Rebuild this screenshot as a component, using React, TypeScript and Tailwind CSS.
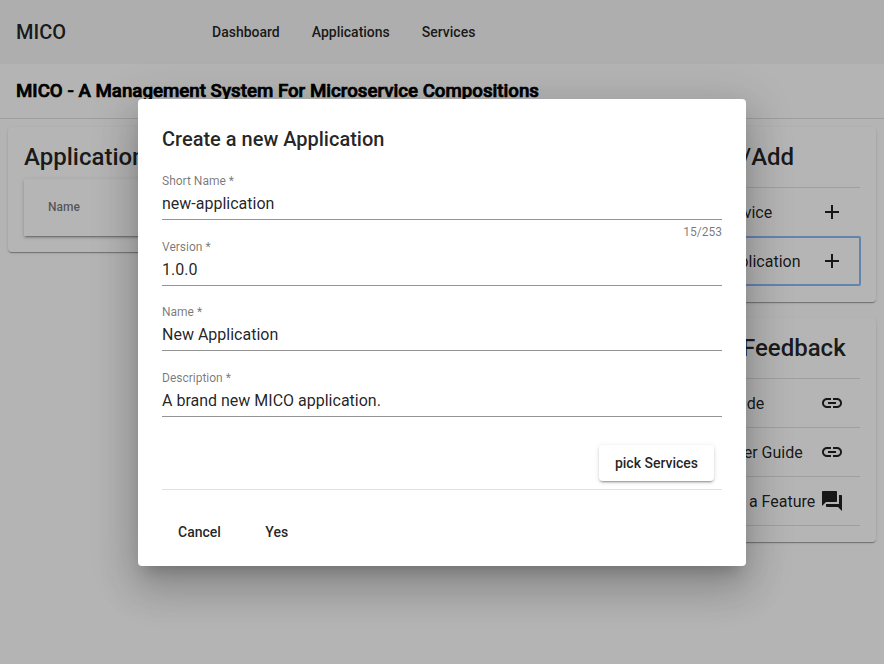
import type { ReactNode } from "react";

const cardShadow =
  "shadow-[0_2px_1px_-1px_rgba(0,0,0,.2),0_1px_1px_0_rgba(0,0,0,.14),0_1px_3px_0_rgba(0,0,0,.12)]";
const raisedShadow =
  "shadow-[0_3px_1px_-2px_rgba(0,0,0,.2),0_2px_2px_0_rgba(0,0,0,.14),0_1px_5px_0_rgba(0,0,0,.12)]";

const ICONS = {
  add: "M19 13h-6v6h-2v-6H5v-2h6V5h2v6h6v2z",
  link: "M3.9 12c0-1.71 1.39-3.1 3.1-3.1h4V7H7c-2.76 0-5 2.24-5 5s2.24 5 5 5h4v-1.900H7c-1.710 0-3.100-1.390-3.100-3.100zM8 13h8v-2H8v2zm9-6h-4v1.900h4c1.710 0 3.100 1.390 3.100 3.100s-1.390 3.100-3.100 3.100h-4V17h4c2.760 0 5-2.240 5-5s-2.240-5-5-5z",
  forum:
    "M21 6h-2v9H6v2c0 .55.45 1 1 1h11l4 4V7c0-.55-.45-1-1-1zm-4 6V3c0-.55-.45-1-1-1H3c-.55 0-1 .45-1 1v14l4-4h10c.55 0 1-.45 1-1z",
};

function Icon({ name }: { name: keyof typeof ICONS }) {
  return (
    <svg viewBox="0 0 24 24" className="h-6 w-6 shrink-0" fill="currentColor">
      <path d={ICONS[name]} />
    </svg>
  );
}

function Card({ title, children }: { title: string; children: ReactNode }) {
  return (
    <section className={`rounded bg-white p-4 ${cardShadow}`}>
      <h2 className="h-9 text-2xl leading-[28px] font-medium whitespace-nowrap">{title}</h2>
      {children}
    </section>
  );
}

function ListRow({ label, icon, focused }: { label: string; icon: keyof typeof ICONS; focused?: boolean }) {
  return (
    <div
      className={`flex items-center justify-between pr-4 whitespace-nowrap ${
        icon === "add" ? "pl-[16.5px]" : "pl-[15.5px]"
      } ${
        focused
          ? "mb-px h-12 rounded-[1px] outline-2 -outline-offset-1 outline-[#8bbcf5]"
          : "h-[49px] border-b border-black/12"
      }`}
    >
      <span className="w-0 pt-[2px]">{label}</span>
      <Icon name={icon} />
    </div>
  );
}

function Field({ label, value, counter }: { label: string; value: string; counter?: string }) {
  return (
    <div className="h-[65.6px]">
      <div className="text-xs leading-[14px] text-black/54">{label} *</div>
      <div className="mt-[6px] h-[26px] border-b border-black/42 text-base leading-[19px]">{value}</div>
      {counter && <div className="mt-[5px] text-right text-xs leading-[14px] text-black/54">{counter}</div>}
    </div>
  );
}

export default function App() {
  return (
    <div className="relative h-[664px] w-[884px] overflow-hidden bg-[#fefefe] font-[Roboto,sans-serif] text-black/87">
      <header className="flex h-16 items-center bg-[#f5f5f5] px-4">
        <span className="w-[196px] text-xl font-medium">MICO</span>
        <nav className="flex gap-8 text-sm font-medium">
          <span>Dashboard</span>
          <span>Applications</span>
          <span>Services</span>
        </nav>
      </header>
      <div className="flex h-[55px] items-center border-b border-black/12 px-4 text-[18.72px] font-medium text-black [-webkit-text-stroke:0.7px_#000]">
        MICO - A Management System For Microservice Compositions
      </div>
      <main className="grid grid-cols-[1fr_220.8px] items-start gap-4 p-2">
        <Card title="Applications">
          <div className={`flex h-[57px] items-center bg-white px-6 pb-[2px] text-xs font-medium text-black/54 ${raisedShadow}`}>
            Name
          </div>
        </Card>
        <div className="grid gap-4">
          <Card title="Create/Add">
            <div className="mt-2 border-t border-black/12">
              <ListRow label="Add Service" icon="add" />
              <ListRow label="Add Application" icon="add" focused />
            </div>
          </Card>
          <Card title="Help / Feedback">
            <div className="mt-2 border-t border-black/12">
              <ListRow label="User Guide" icon="link" />
              <ListRow label="Developer Guide" icon="link" />
              <ListRow label="Request a Feature" icon="forum" />
            </div>
          </Card>
        </div>
      </main>

      <div className="absolute inset-0 flex items-center justify-center bg-black/29 pt-px">
        <div className="h-[467px] w-[608px] rounded bg-white p-6 shadow-[0_11px_15px_-7px_rgba(0,0,0,.2),0_24px_38px_3px_rgba(0,0,0,.14),0_9px_46px_8px_rgba(0,0,0,.12)]">
          <h1 className="h-[51px] text-xl leading-8 font-medium">Create a new Application</h1>
          <Field label="Short Name" value="new-application" counter="15/253" />
          <Field label="Version" value="1.0.0" />
          <Field label="Name" value="New Application" />
          <Field label="Description" value="A brand new MICO application." />
          <div className="mt-[9px] flex justify-end border-b border-black/12 pr-2 pb-2">
            <button className={`h-9 rounded bg-white px-4 text-sm font-medium ${raisedShadow}`}>pick Services</button>
          </div>
          <div className="mt-6 flex gap-[12.5px] text-sm font-medium">
            <button className="h-9 px-4">Cancel</button>
            <button className="h-9 px-4">Yes</button>
          </div>
        </div>
      </div>
    </div>
  );
}
